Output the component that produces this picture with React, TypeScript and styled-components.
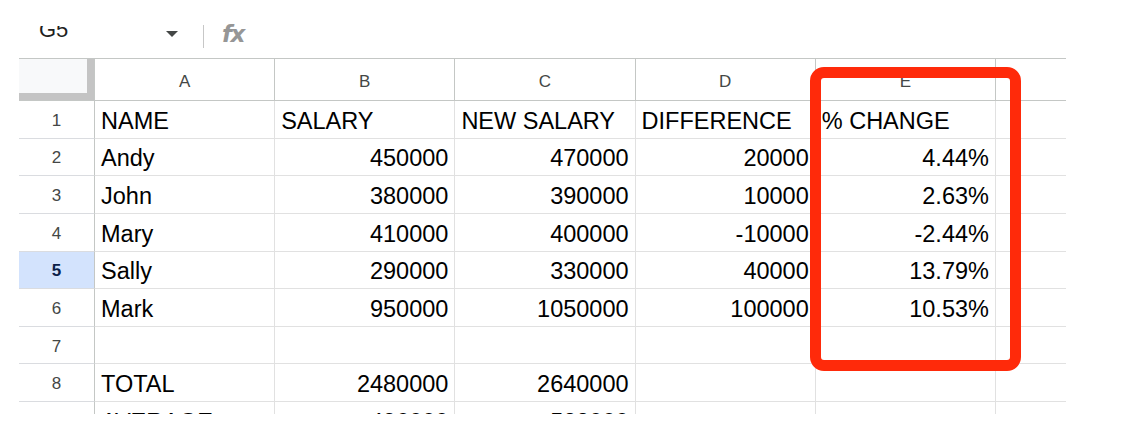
import React from "react";
import styled, { createGlobalStyle } from "styled-components";

const GlobalStyle = createGlobalStyle`
  *, *::before, *::after { box-sizing: border-box; }
  html, body { margin: 0; padding: 0; background: #ffffff; }
  body { font-family: "Liberation Sans", Arial, sans-serif; }
`;

const Page = styled.div`
  position: relative;
  width: 1124px;
  height: 438px;
  overflow: hidden;
  background: #ffffff;
`;

const Toolbar = styled.div`
  display: flex;
  align-items: flex-start;
  height: 58px;
  padding-left: 39px;
`;

const NameBox = styled.div`
  width: 127px;
  height: 13px;
  margin-top: 26px;
  overflow: hidden;
`;

const NameText = styled.span`
  display: block;
  margin-top: -4px;
  font-size: 22px;
  line-height: 16px;
  color: #1f1f1f;
`;

const Caret = styled.svg`
  margin-top: 31px;
  width: 12px;
  height: 7px;
  fill: #444746;
`;

const Divider = styled.div`
  width: 1px;
  height: 23px;
  margin-top: 25px;
  margin-left: 25px;
  background: #c7c7c7;
`;

const Fx = styled.span`
  margin-top: 23px;
  margin-left: 18px;
  font-family: "DejaVu Sans", sans-serif;
  font-style: italic;
  font-weight: bold;
  font-size: 23px;
  line-height: 23px;
  letter-spacing: -1.5px;
  color: #969696;
`;

const Viewport = styled.div`
  margin-left: 19px;
  width: 1047px;
  height: 356px;
  overflow: hidden;
  border-top: 1px solid #c4c7c5;
`;

const Grid = styled.div`
  display: grid;
  grid-template-columns: 76px repeat(5, 180.2px) 70px;
  grid-template-rows: 42px;
  grid-auto-rows: 37.625px;
`;

const Corner = styled.div`
  background: #f8f9fa;
  border-right: 1px solid #c4c7c5;
  border-bottom: 1px solid #c4c7c5;
  box-shadow: inset -7px -7px 0 0 #c4c4c4;
`;

const ColHeader = styled.div<{ $last?: boolean }>`
  display: flex;
  align-items: center;
  justify-content: center;
  padding-top: 4px;
  border-right: ${(p) => (p.$last ? "none" : "1px solid #c4c7c5")};
  border-bottom: 1px solid #c4c7c5;
  font-size: 17px;
  color: #444746;
`;

const RowHeader = styled.div<{ $selected?: boolean }>`
  display: flex;
  align-items: center;
  justify-content: center;
  padding-top: 3px;
  border-right: 1px solid #c4c7c5;
  border-bottom: 1px solid #dadce0;
  font-size: 17px;
  background: ${(p) => (p.$selected ? "#d3e3fd" : "#ffffff")};
  color: ${(p) => (p.$selected ? "#0b1f4a" : "#444746")};
  font-weight: ${(p) => (p.$selected ? "bold" : "normal")};
`;

const Cell = styled.div<{ $right?: boolean; $last?: boolean }>`
  display: flex;
  align-items: center;
  justify-content: ${(p) => (p.$right ? "flex-end" : "flex-start")};
  padding: 4px 6px 0 6px;
  border-right: ${(p) => (p.$last ? "none" : "1px solid #e1e1e1")};
  border-bottom: 1px solid #e1e1e1;
  font-size: 23.5px;
  color: #000000;
  white-space: nowrap;
  overflow: hidden;
`;

const Highlight = styled.div`
  position: absolute;
  left: 810px;
  top: 67px;
  width: 211px;
  height: 304px;
  border: 11px solid #ff2a0a;
  border-radius: 14px;
  pointer-events: none;
`;

const columns = ["A", "B", "C", "D", "E", ""];

type Row = { n: number; values: string[] };

const rows: Row[] = [
  { n: 1, values: ["NAME", "SALARY", "NEW SALARY", "DIFFERENCE", "% CHANGE"] },
  { n: 2, values: ["Andy", "450000", "470000", "20000", "4.44%"] },
  { n: 3, values: ["John", "380000", "390000", "10000", "2.63%"] },
  { n: 4, values: ["Mary", "410000", "400000", "-10000", "-2.44%"] },
  { n: 5, values: ["Sally", "290000", "330000", "40000", "13.79%"] },
  { n: 6, values: ["Mark", "950000", "1050000", "100000", "10.53%"] },
  { n: 7, values: ["", "", "", "", ""] },
  { n: 8, values: ["TOTAL", "2480000", "2640000", "", ""] },
  { n: 9, values: ["AVERAGE", "496000", "528000", "", ""] },
];

const isNumeric = (v: string) => /^-?[\d.]+%?$/.test(v);

export default function App() {
  return (
    <>
      <GlobalStyle />
      <Page>
        <Toolbar>
          <NameBox>
            <NameText>G5</NameText>
          </NameBox>
          <Caret viewBox="0 0 12 7">
            <path d="M0 0 L12 0 L6 6 Z" />
          </Caret>
          <Divider />
          <Fx>fx</Fx>
        </Toolbar>
        <Viewport>
          <Grid>
            <Corner />
            {columns.map((c, i) => (
              <ColHeader key={i} $last={i === columns.length - 1}>
                {c}
              </ColHeader>
            ))}
            {rows.map((r) => (
              <React.Fragment key={r.n}>
                <RowHeader $selected={r.n === 5}>{r.n}</RowHeader>
                {r.values.map((v, i) => (
                  <Cell key={i} $right={isNumeric(v)}>
                    {v}
                  </Cell>
                ))}
                <Cell $last />
              </React.Fragment>
            ))}
          </Grid>
        </Viewport>
        <Highlight />
      </Page>
    </>
  );
}
